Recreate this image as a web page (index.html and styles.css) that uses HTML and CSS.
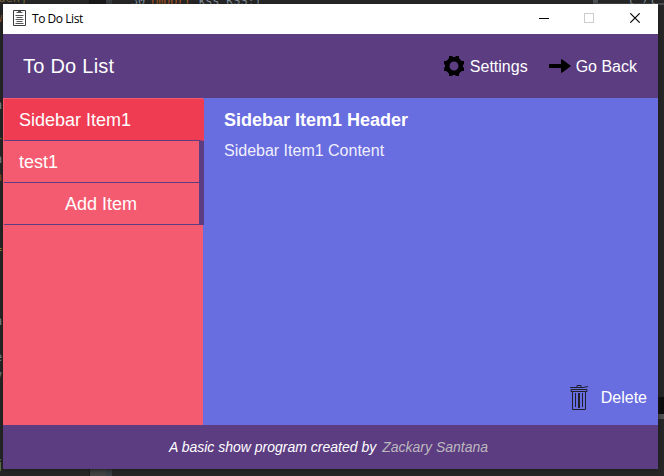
FILE: index.html
```html
<!DOCTYPE html>
<html lang="en">
<head>
<meta charset="utf-8">
<title>To Do List</title>
<link rel="stylesheet" href="styles.css">
</head>
<body>
<div class="desktop">
  <div class="editor" aria-hidden="true">
    <span class="tab tab-top"></span><span class="tab tab-bottom"></span>
    <span class="edge edge-top"></span><span class="edge edge-right"></span>
    <span class="code code-menu">nuenj</span>
    <span class="code code-top"><i>30</i><b>import</b> kss KSS;|</span>
    <span class="code code-brace">{ ){ [</span>
    <span class="code g1">a</span><span class="code g2">r</span><span class="code g3">a</span><span class="code g4">a</span>
    <span class="code g5">=</span><span class="code g6">a</span><span class="code g7">e</span><span class="code g8">v</span><span class="code g9">j</span>
    <span class="code g10">w</span>
  </div>
  <main class="window">
    <div class="titlebar">
      <svg class="app-icon" width="13" height="16" viewBox="0 0 13 16" fill="none" stroke="#3c3c3c">
        <path d="M.5 .5h12v15H.5z"/><path d="M3.500 2.500h6M5 1.500h3M2.500 5.500h8M3.500 7.500h6M2.500 9.500h8M3.500 11.500h6M2.500 13.500h8" stroke="#555"/>
      </svg>
      <span class="caption">To Do List</span>
      <svg class="controls" width="102" height="10" viewBox="0 0 102 10" fill="none">
        <path d="M0 5.500h10" stroke="#000"/>
        <rect x="45.500" y=".5" width="9" height="9" stroke="#ccc"/>
        <path d="M91.300 .3l9.400 9.400M100.700 .3l-9.400 9.400" stroke="#000" stroke-width="1.100"/>
      </svg>
    </div>
    <header class="header">
      <h1>To Do List</h1>
      <nav>
        <a class="action settings"><svg width="20" height="20" viewBox="0 0 20 20">
          <circle cx="10" cy="10" r="6.750" fill="none" stroke="#000" stroke-width="4.500"/>
          <path d="M5 0h3l1 1h2l1-1h3v2l1 2H4l1-2zM5 20h3l1-1h2l1 1h3v-2l1-2H4l1 2zM0 5v3l1 1v2l-1 1v3h2l2 1V4L2 5zM20 5v3l-1 1v2l1 1v3h-2l-2 1V4l2 1z"/>
        </svg><span>Settings</span></a>
        <a class="action back"><svg width="22" height="14" viewBox="0 0 22 14"><path d="M0 5h12V0l2 1 8 6-8 6-2 1V9H0z"/></svg><span>Go Back</span></a>
      </nav>
    </header>
    <section class="body">
      <aside class="sidebar">
        <div class="item active">Sidebar Item1</div>
        <div class="item">test1</div>
        <div class="item add">Add Item</div>
      </aside>
      <article class="content">
        <h2>Sidebar Item1 Header</h2>
        <p>Sidebar Item1 Content</p>
        <a class="delete"><svg width="18" height="26" viewBox="0 0 18 26" fill="none" stroke="#20202c">
          <path d="M0 2.500h13l5-1M7 2V.5h4V2M1 4.500h16v2H1zM2.500 6.500v18h13v-18"/><path d="M5.500 8v14M12.500 8v14"/><path d="M9 8v15" stroke-width="2"/>
        </svg>Delete</a>
      </article>
    </section>
    <footer class="footer"><span>A basic show program created by</span><a>Zackary Santana</a></footer>
  </main>
</div>
</body>
</html>
```
FILE: styles.css
```css
* { box-sizing: border-box; }
body { margin: 0; font-family: "Liberation Sans", Arial, sans-serif; }
.desktop { position: relative; width: 664px; height: 476px; padding: 4px 6px 7px 3px; overflow: hidden; background: #272727; }
.window { position: relative; display: flex; flex-direction: column; width: 655px; height: 465px; box-shadow: 0 1px 5px #1b1b1b; color: #fff; }

.titlebar { display: flex; align-items: center; height: 30px; padding: 0 17px 0 10px; background: #fff; color: #000; }
.app-icon { position: relative; top: -1px; }
.caption { margin-left: 6px; font: 12px/16px "Open Sans", "Noto Sans", sans-serif; letter-spacing: -.45px; }
.controls { margin-left: auto; margin-top: -2px; }

.header { display: flex; align-items: center; justify-content: space-between; height: 64px; padding: 0 21px 0 20px; background: #5c3d82; }
h1 { margin: 0; font-size: 20px; font-weight: 400; line-height: 24px; letter-spacing: .25px; }
nav, .action { display: flex; align-items: center; }
nav { gap: 21px; }
.action { font-size: 16px; line-height: 20px; }
.action span { padding-top: 1px; }
.settings { gap: 6px; }
.back { gap: 5px; }

.body { display: flex; height: 327px; }
.sidebar { width: 200px; padding: 1px 0 0 1px; background: #f45b70; }
.item { position: relative; width: 200px; height: 42px; padding-left: 15px; border-right: 5px solid #5c3d82; border-bottom: 1px solid #5c3d82; background: #f45b70; font-size: 18px; line-height: 43px; }
.active { border-right-color: #f03c52; background: #f03c52; }
.add { padding: 0 1px 0 0; text-align: center; }
.content { display: flex; flex: 1; flex-direction: column; padding: 12px 11px 13px 21px; background: #686de0; }
h2 { margin: 0; font-size: 18px; line-height: 21px; }
p { margin: 10px 0 0; font-size: 16px; line-height: 20px; color: #f0f0fc; }
.delete { display: flex; align-items: center; gap: 13px; margin: auto 0 0 auto; font-size: 16px; line-height: 28px; }
.footer { display: flex; align-items: center; justify-content: center; gap: 6px; height: 44px; padding-right: 4px; background: #5c3d82; font-size: 14px; font-style: italic; }
.footer a { color: #bdb8bd; }

.code, .tab, .edge { position: absolute; }
.code { font: 12px/14px "DejaVu Sans Mono", monospace; color: #8796a3; white-space: pre; }
.code i { margin-right: 4px; font-style: normal; color: #8095a6; }
.code b { font-weight: 400; color: #b65b24; }
.tab { left: 89px; width: 23px; background: #444; border-left: 1px solid #181818; border-right: 6px solid #3a4044; }
.tab-top { top: 0; height: 4px; background: #191919; }
.tab-bottom { top: 469px; height: 7px; }
.edge-top { left: 593px; top: 0; width: 71px; height: 5px; border-left: 5px solid #4d5357; border-bottom: 2px solid #4b4e50; }
.edge-right { left: 658px; top: 397px; width: 6px; height: 22px; background: #0c0c0c; border-bottom: 5px solid #505254; }
.code-menu { left: -9px; top: -9px; color: #77683a; }
.code-top { left: 131px; top: -6px; letter-spacing: -.2px; }
.code-brace { left: 627px; top: -9px; }
.g1 { left: -5px; top: 98px; }
.g2 { left: -5px; top: 134px; color: #996044; }
.g3 { left: -5px; top: 152px; }
.g4 { left: -5px; top: 170px; color: #9a4d25; }
.g5 { left: -5px; top: 242px; color: #a58836; }
.g6 { left: -5px; top: 314px; }
.g7 { left: -5px; top: 350px; }
.g8 { left: -5px; top: 368px; color: #8099a8; }
.g9 { left: -4px; top: 458px; color: #63a79b; }
.g10 { left: -5px; top: 11px; color: #a06035; }
```
